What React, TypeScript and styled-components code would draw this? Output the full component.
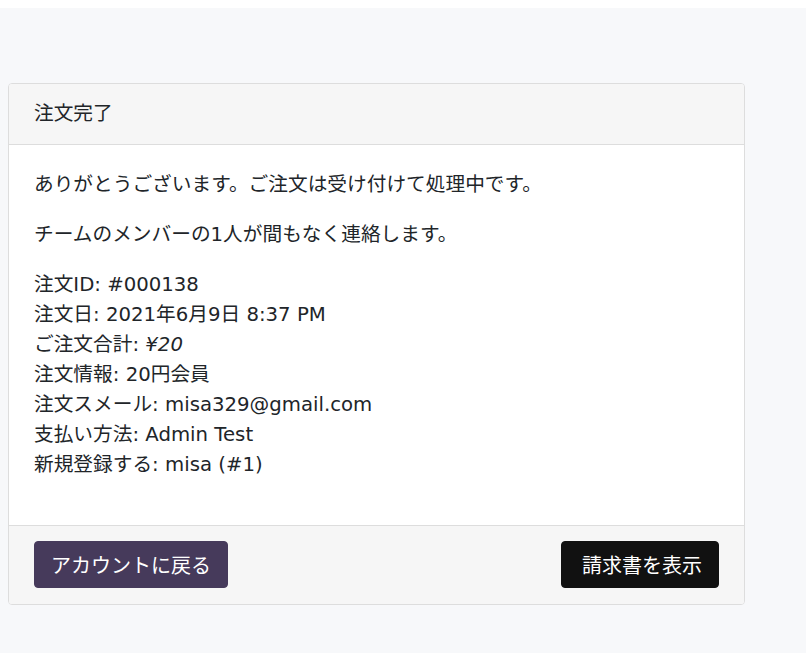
import React from "react";
import styled, { createGlobalStyle } from "styled-components";

const GlobalStyle = createGlobalStyle`
  html, body {
    margin: 0;
    padding: 0;
    background: #ffffff;
  }
  body {
    font-family: "DejaVu Sans", "Noto Sans CJK JP", sans-serif;
    color: #212529;
  }
`;

const Page = styled.div`
  margin-top: 8px;
  background: #f7f8fa;
  min-height: 645px;
  padding: 75px 0 0 8px;
  box-sizing: border-box;
`;

const Card = styled.section`
  width: 737px;
  box-sizing: border-box;
  background: #ffffff;
  border: 1px solid #dddddd;
  border-radius: 4px;
  overflow: hidden;
`;

const CardHeader = styled.div`
  background: #f6f6f6;
  border-bottom: 1px solid #dddddd;
  padding: 15px 25px;
  font-size: 19.7px;
  line-height: 30px;
`;

const CardBody = styled.div`
  padding: 25px;
  font-size: 19.7px;
  line-height: 30px;
`;

const Para = styled.p`
  margin: 0 0 20px;
`;

const CardFooter = styled.div`
  background: #f6f6f6;
  border-top: 1px solid #dddddd;
  padding: 15px 25px 16px;
  display: flex;
  justify-content: space-between;
  align-items: center;
`;

const Button = styled.button<{ $variant: "primary" | "dark" }>`
  font-family: "Noto Sans CJK JP", sans-serif;
  font-size: 20px;
  line-height: 29px;
  padding: 8px 16px;
  border: 1px solid ${(p) => (p.$variant === "primary" ? "#463a5b" : "#111111")};
  background: ${(p) => (p.$variant === "primary" ? "#463a5b" : "#111111")};
  color: #ffffff;
  border-radius: 4px;
  cursor: pointer;
  white-space: pre;
`;

export default function App() {
  return (
    <>
      <GlobalStyle />
      <Page>
        <Card>
          <CardHeader>注文完了</CardHeader>
          <CardBody>
            <Para>ありがとうございます。ご注文は受け付けて処理中です。</Para>
            <Para>チームのメンバーの1人が間もなく連絡します。</Para>
            <Para>
              注文ID: #000138
              <br />
              注文日: 2021年6月9日 8:37 PM
              <br />
              ご注文合計: <em>¥20</em>
              <br />
              注文情報: 20円会員
              <br />
              注文スメール: misa329@gmail.com
              <br />
              支払い方法: Admin Test
              <br />
              新規登録する: misa (#1)
            </Para>
          </CardBody>
          <CardFooter>
            <Button $variant="primary">アカウントに戻る</Button>
            <Button $variant="dark">{" 請求書を表示"}</Button>
          </CardFooter>
        </Card>
      </Page>
    </>
  );
}
